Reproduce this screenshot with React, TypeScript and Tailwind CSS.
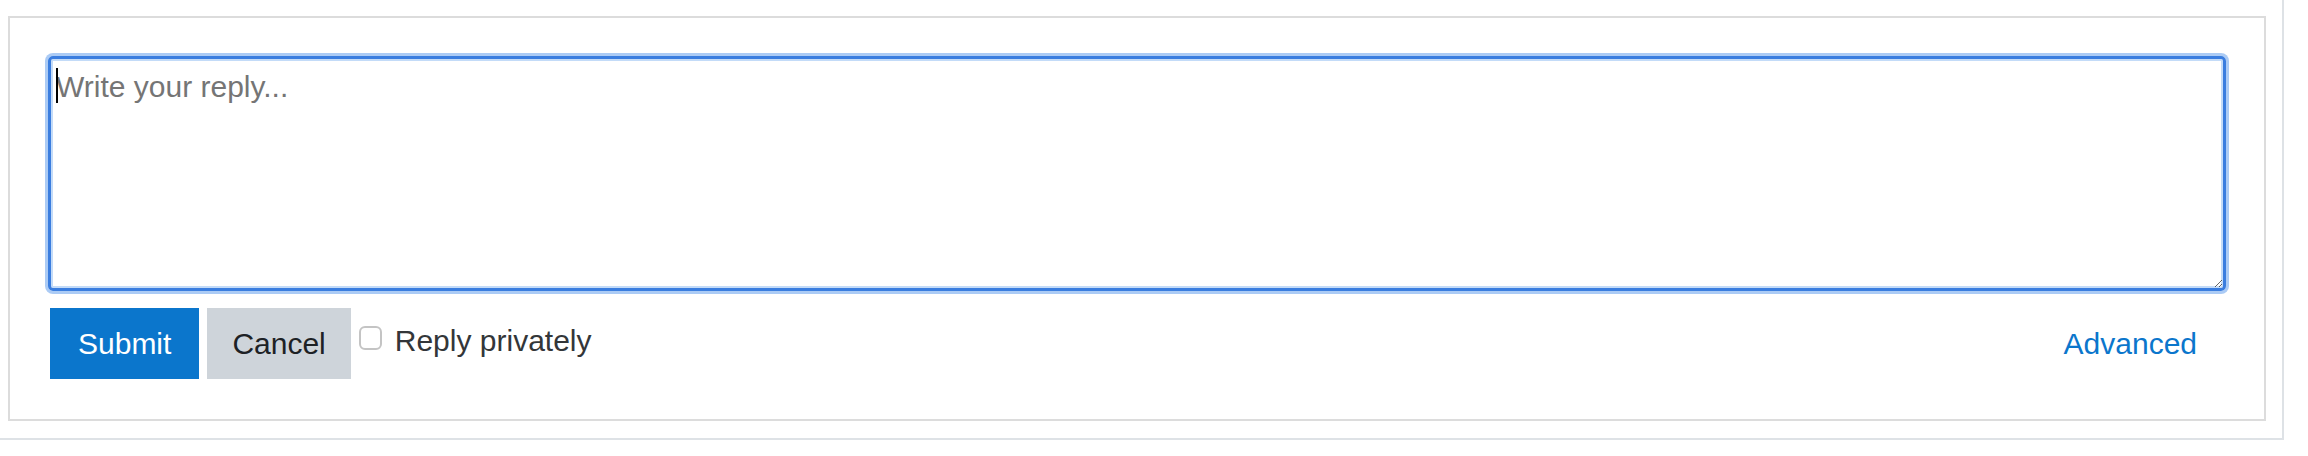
import { useState } from "react";

export default function App() {
  const [reply, setReply] = useState("");
  const [isPrivate, setIsPrivate] = useState(false);

  return (
    <div className="w-[2284px] h-[440px] bg-white border-r-2 border-b-2 border-[#dee2e6] pl-2 pt-4 font-['Liberation_Sans',Arial,sans-serif] text-[30px] leading-[45px]">
      <div className="w-[2258px] h-[405px] border-2 border-[#dcdcdc] px-[38px] pt-[38px]">
        <div className="relative">
          <textarea
            value={reply}
            onChange={(e) => setReply(e.target.value)}
            placeholder="Write your reply..."
            className="block w-full h-[235px] rounded-[5px] border-[3px] border-[#3a7ddf] pl-[5px] pr-2 pt-[5px] text-[30px] leading-[45px] text-[#1d2125] placeholder:text-[#757575] outline-none shadow-[0_0_0_3px_#abcbf5,inset_0_0_0_2px_#c3dbf8] resize-y"
          />
          {/* static caret like in the screenshot */}
          {reply === "" && (
            <span className="absolute left-[8px] top-[12px] w-[2px] h-[35px] bg-black" />
          )}
        </div>

        <div className="mt-[17px] ml-[2px] flex items-start">
          <button className="h-[71px] px-[27px] bg-[#0b76cc] text-white border border-[#0b76cc]">
            Submit
          </button>
          <button className="ml-2 h-[71px] px-[24px] bg-[#ced4da] text-[#1d2125] border border-[#ced4da]">
            Cancel
          </button>
          <label className="ml-2 mt-[10px] flex items-start gap-[13px] text-[#333639]">
            <input
              type="checkbox"
              checked={isPrivate}
              onChange={(e) => setIsPrivate(e.target.checked)}
              className="mt-[8px] w-[23px] h-[24px] appearance-none rounded-[6px] border-2 border-[#c4c4c4] bg-white"
            />
            <span>Reply privately</span>
          </label>
          <button className="ml-auto self-center pr-[29px] text-[#0b76cc]">
            Advanced
          </button>
        </div>
      </div>
    </div>
  );
}
